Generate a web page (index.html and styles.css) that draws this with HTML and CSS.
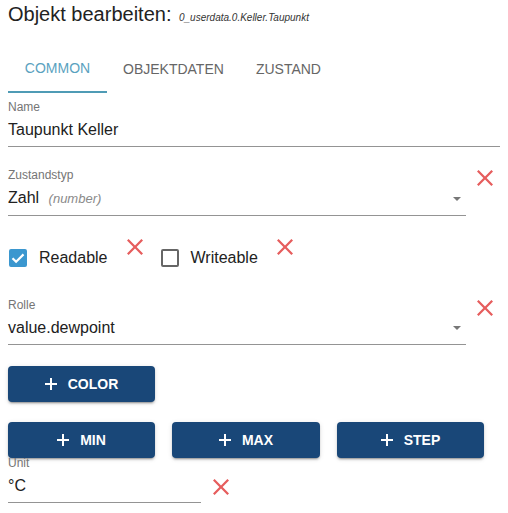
FILE: index.html
```html
<!DOCTYPE html>
<html lang="de">
<head>
    <meta charset="UTF-8">
    <meta name="viewport" content="width=device-width, initial-scale=1.0">
    <title>Objekt bearbeiten</title>
    <link rel="stylesheet" href="styles.css">
</head>

<body>
    <div class="page">

        <h1 class="title">Objekt bearbeiten: <span class="obj-id">0_userdata.0.Keller.Taupunkt</span></h1>

        <nav class="tabs">
            <div class="tab active">COMMON</div>
            <div class="tab">OBJEKTDATEN</div>
            <div class="tab">ZUSTAND</div>
        </nav>

        <div class="field name-field">
            <label>Name</label>
            <div class="value">Taupunkt Keller</div>
        </div>

        <div class="row type-row">
            <div class="field select-field">
                <label>Zustandstyp</label>
                <div class="value">
                    <span>Zahl <i class="hint">(number)</i></span>
                    <span class="arrow"></span>
                </div>
            </div>
            <svg class="remove" viewBox="5 5 14 14"><path d="M19 6.41L17.59 5 12 10.59 6.41 5 5 6.41 10.59 12 5 17.59 6.41 19 12 13.41 17.59 19 19 17.59 13.41 12z"/></svg>
        </div>

        <div class="row check-row">
            <span class="box checked">
                <svg viewBox="0 0 18 18"><path d="M3.5 9.2l3.6 3.6 7.4-7.4" fill="none" stroke="#fff" stroke-width="2.2"/></svg>
            </span>
            <span class="check-label">Readable</span>
            <svg class="remove small" viewBox="5 5 14 14"><path d="M19 6.41L17.59 5 12 10.59 6.41 5 5 6.41 10.59 12 5 17.59 6.41 19 12 13.41 17.59 19 19 17.59 13.41 12z"/></svg>

            <span class="box second"></span>
            <span class="check-label">Writeable</span>
            <svg class="remove small" viewBox="5 5 14 14"><path d="M19 6.41L17.59 5 12 10.59 6.41 5 5 6.41 10.59 12 5 17.59 6.41 19 12 13.41 17.59 19 19 17.59 13.41 12z"/></svg>
        </div>

        <div class="row role-row">
            <div class="field select-field">
                <label>Rolle</label>
                <div class="value">
                    <span>value.dewpoint</span>
                    <span class="arrow"></span>
                </div>
            </div>
            <svg class="remove" viewBox="5 5 14 14"><path d="M19 6.41L17.59 5 12 10.59 6.41 5 5 6.41 10.59 12 5 17.59 6.41 19 12 13.41 17.59 19 19 17.59 13.41 12z"/></svg>
        </div>

        <div class="btn-row color-row">
            <button class="btn"><span class="plus"></span>COLOR</button>
        </div>

        <div class="btn-row range-row">
            <button class="btn"><span class="plus"></span>MIN</button>
            <button class="btn wide"><span class="plus"></span>MAX</button>
            <button class="btn"><span class="plus"></span>STEP</button>
        </div>

        <div class="row unit-row">
            <div class="field unit-field">
                <label>Unit</label>
                <div class="value">°C</div>
            </div>
            <svg class="remove unit-x" viewBox="5 5 14 14"><path d="M19 6.41L17.59 5 12 10.59 6.41 5 5 6.41 10.59 12 5 17.59 6.41 19 12 13.41 17.59 19 19 17.59 13.41 12z"/></svg>
        </div>

    </div>
</body>
</html>
```

FILE: styles.css
```css
* {
    margin: 0;
    padding: 0;
    box-sizing: border-box;
}

body {
    background: #fff;
    font-family: "Liberation Sans", Arial, sans-serif;
    color: #212121;
    overflow: hidden;
}

.page {
    padding: 0 8px;
}

.title {
    font-size: 20px;
    font-weight: normal;
    line-height: 28px;
    height: 28px;
    color: #222;
}

.obj-id {
    font-size: 10px;
    line-height: 10px;
    font-style: italic;
    color: #333;
    margin-left: 2px;
}

/* tabs */
.tabs {
    display: flex;
    margin-top: 17px;
    height: 48px;
}

.tab {
    padding: 0 16px;
    height: 48px;
    line-height: 48px;
    font-size: 14px;
    color: #666;
}

.tab.active {
    color: #5aa2c0;
    border-bottom: 2px solid #4f9bb5;
    line-height: 47px;
    width: 99px;
    padding: 0;
    text-align: center;
}

/* text fields */
.field label {
    display: block;
    font-size: 12px;
    line-height: 14px;
    color: #757575;
}

.field .value {
    margin-top: 6px;
    padding-bottom: 6px;
    font-size: 16px;
    line-height: 20px;
    border-bottom: 1px solid #949494;
}

.name-field {
    margin-top: 7px;
    width: 492px;
}

.row {
    display: flex;
    align-items: flex-start;
}

.select-field {
    width: 458px;
}

.select-field .value {
    display: flex;
    justify-content: space-between;
    align-items: center;
}

.hint {
    font-size: 13px;
    color: #8a8a8a;
    margin-left: 5px;
}

.arrow {
    width: 0;
    height: 0;
    border-left: 4px solid transparent;
    border-right: 4px solid transparent;
    border-top: 4px solid #777;
    margin-right: 5px;
}

.remove {
    width: 16px;
    height: 16px;
    fill: #e65d5d;
    flex: none;
}

.type-row {
    margin-top: 21px;
}

.type-row .remove,
.role-row .remove {
    margin-left: 11px;
    margin-top: 2px;
}

/* checkboxes */
.check-row {
    margin-top: 21px;
    height: 42px;
    align-items: center;
}

.box {
    width: 18px;
    height: 18px;
    border: 2px solid #666;
    border-radius: 2px;
    margin-left: 1px;
    flex: none;
}

.box.checked {
    background: #3b97cf;
    border-color: #3b97cf;
    margin-left: 1px;
    position: relative;
}

.box.checked svg {
    position: absolute;
    left: -2px;
    top: -2px;
    width: 18px;
    height: 18px;
}

.box.second {
    margin-left: 18px;
}

.check-label {
    margin-left: 12px;
    font-size: 16px;
    line-height: 20px;
    color: #222;
}

.remove.small {
    align-self: flex-start;
    margin-top: 2px;
    margin-left: 19px;
}

.role-row {
    margin-top: 19px;
}

/* buttons */
.btn-row {
    display: flex;
    gap: 17px;
}

.color-row {
    margin-top: 21px;
}

.range-row {
    margin-top: 20px;
}

.btn {
    width: 147px;
    height: 36px;
    border: none;
    border-radius: 4px;
    background: #194778;
    color: #fff;
    font-family: "Liberation Sans", Arial, sans-serif;
    font-size: 14px;
    font-weight: bold;
    display: flex;
    align-items: center;
    justify-content: center;
    box-shadow: 0 3px 1px -2px rgba(0,0,0,0.2), 0 2px 2px 0 rgba(0,0,0,0.14), 0 1px 5px 0 rgba(0,0,0,0.12);
}

.btn.wide {
    width: 148px;
}

.plus {
    position: relative;
    width: 12px;
    height: 12px;
    margin-right: 11px;
}

.plus::before,
.plus::after {
    content: "";
    position: absolute;
    background: #fff;
}

.plus::before {
    left: 0;
    top: 5px;
    width: 12px;
    height: 2px;
}

.plus::after {
    left: 5px;
    top: 0;
    width: 2px;
    height: 12px;
}

/* unit */
.unit-row {
    margin-top: -2px;
}

.unit-field {
    width: 193px;
}

.unit-x {
    margin-left: 12px;
    margin-top: 23px;
}
```
